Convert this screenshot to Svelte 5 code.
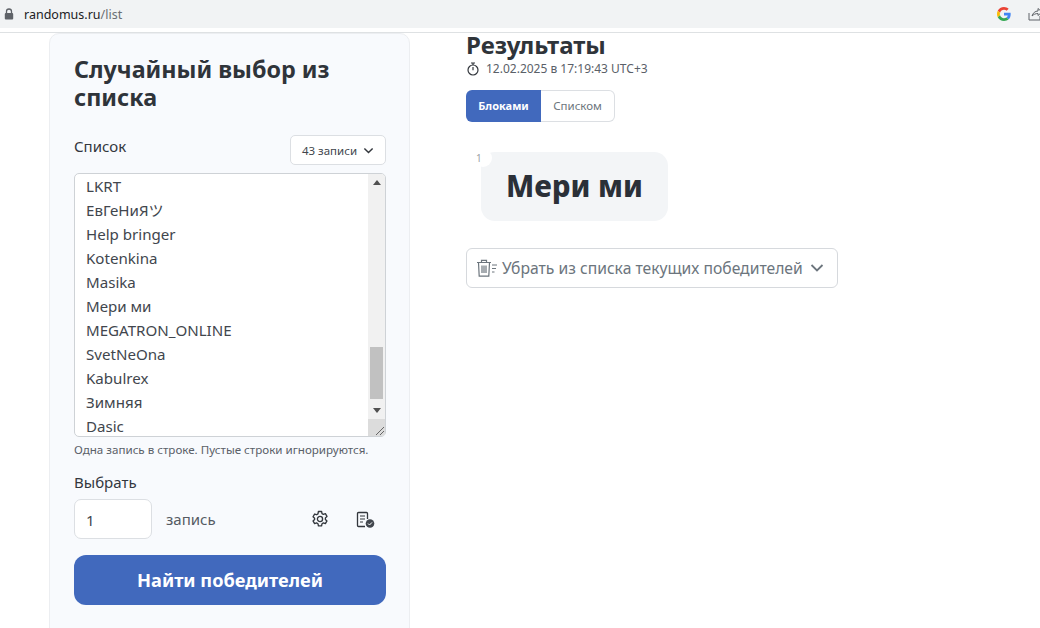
<script>
  const entries = ['LKRT', 'ЕвГеНиЯツ', 'Help bringer', 'Kotenkina', 'Masika', 'Мери ми', 'MEGATRON_ONLINE', 'SvetNeOna', 'Kabulrex', 'Зимняя', 'Dasic'];
</script>

<div class="shot">
  <header class="browser">
    <svg class="lock" viewBox="0 0 10 12" width="10" height="12"><path d="M2.5 5V3.5a2.5 2.5 0 0 1 5 0V5" fill="none" stroke="#5f6368" stroke-width="1.3"/><rect x="0.8" y="5" width="8.4" height="6.4" rx="1" fill="#5f6368"/></svg>
    <span class="url">randomus.ru<span class="path">/list</span></span>
    <div class="browser-icons">
      <svg viewBox="0 0 48 48" width="14" height="14">
        <path fill="#EA4335" d="M24 9.5c3.5 0 6.700 1.300 9.100 3.500l6.800-6.800C35.800 2.400 30.300 0 24 0 14.600 0 6.500 5.400 2.600 13.200l7.900 6.100C12.400 13.700 17.700 9.500 24 9.500z"/>
        <path fill="#4285F4" d="M46.900 24.500c0-1.600-.1-3.100-.4-4.500H24v9h12.900c-.6 3-2.200 5.500-4.700 7.200l7.700 6c4.500-4.200 7-10.300 7-17.700z"/>
        <path fill="#FBBC05" d="M10.500 28.700c-.5-1.400-.8-3-.8-4.700s.3-3.300.8-4.700l-7.900-6.100C.9 16.500 0 20.100 0 24s.9 7.500 2.600 10.800l7.900-6.100z"/>
        <path fill="#34A853" d="M24 48c6.500 0 11.900-2.100 15.900-5.800l-7.700-6c-2.100 1.400-4.900 2.300-8.200 2.300-6.300 0-11.600-4.200-13.500-9.800l-7.900 6.100C6.500 42.600 14.600 48 24 48z"/>
      </svg>
      <svg class="share" viewBox="0 0 14 14" width="14" height="14"><path d="M1 6v7h11V9M4 9c1-3 3-5 6-5V1.500L14 5l-4 3.500V6.500C7.500 6.500 5.500 7.500 4 9z" fill="none" stroke="#5f6368" stroke-width="1"/></svg>
    </div>
  </header>

  <main class="page">
    <section class="card">
      <h1>Случайный выбор из списка</h1>

      <div class="list-head">
        <span class="label">Список</span>
        <button class="count">43 записи
          <svg viewBox="0 0 12 12" width="11" height="11"><path d="M1.500 3.800 6 8.200l4.500-4.400" fill="none" stroke="#33373d" stroke-width="1.600"/></svg>
        </button>
      </div>

      <div class="textarea">
        <div class="lines">
          {#each entries as entry}
            <div>{entry}</div>
          {/each}
        </div>
        <div class="scrollbar">
          <svg class="arrow" viewBox="0 0 8 5" width="8" height="5"><path d="M0 5 4 0l4 5z" fill="#505050"/></svg>
          <div class="track"><div class="thumb"></div></div>
          <svg class="arrow" viewBox="0 0 8 5" width="8" height="5"><path d="M0 0l4 5 4-5z" fill="#505050"/></svg>
          <div class="grip">
            <svg viewBox="0 0 9 9" width="9" height="9"><path d="M1 9 9 1M5 9l4-4" stroke="#666" stroke-width="1"/></svg>
          </div>
        </div>
      </div>
      <p class="hint">Одна запись в строке. Пустые строки игнорируются.</p>

      <div class="label pick">Выбрать</div>
      <div class="pick-row">
        <div class="number">1</div>
        <span class="unit">запись</span>
        <svg class="gear" viewBox="0 0 16 16" width="18" height="18">
          <path fill="none" stroke="#33373d" stroke-width="1.200" stroke-linejoin="round" d="M6.600 1.300h2.800l.4 1.900 1.200.7 1.800-.6 1.400 2.400-1.400 1.300v1.400l1.400 1.300-1.400 2.400-1.800-.6-1.200.7-.4 1.900H6.600l-.4-1.900-1.200-.7-1.800.6-1.400-2.400 1.400-1.300V7.300L1.800 6l1.400-2.400 1.800.6 1.200-.7z"/>
          <circle cx="8" cy="8" r="2.300" fill="none" stroke="#33373d" stroke-width="1.200"/>
        </svg>
        <svg class="checklist" viewBox="0 0 19 17" width="19" height="17">
          <path fill="none" stroke="#33373d" stroke-width="1.300" d="M9 15.500H2.500a1 1 0 0 1-1-1v-12a1 1 0 0 1 1-1h8a1 1 0 0 1 1 1V8"/>
          <path stroke="#33373d" stroke-width="1.200" d="M4 5h5M4 8h5M4 11h3"/>
          <circle cx="14" cy="12.500" r="4.300" fill="#41464d"/>
          <path d="m12 12.500 1.500 1.500 2.500-2.600" fill="none" stroke="#fff" stroke-width="1"/>
        </svg>
      </div>

      <button class="submit">Найти победителей</button>
    </section>

    <section class="results">
      <h2>Результаты</h2>
      <div class="stamp">
        <svg viewBox="0 0 12 14" width="12" height="14"><circle cx="6" cy="8" r="5" fill="none" stroke="#33373d" stroke-width="1.200"/><path d="M4 1h4M6 1v2M6 5v3.200" stroke="#33373d" stroke-width="1.200" fill="none"/></svg>
        <span>12.02.2025 в 17:19:43 UTC+3</span>
      </div>

      <div class="toggle">
        <span class="on">Блоками</span>
        <span class="off">Списком</span>
      </div>

      <div class="winner">
        <span class="rank">1</span>
        <div class="chip">Мери ми</div>
      </div>

      <button class="remove">
        <svg viewBox="0 0 22 20" width="22" height="20">
          <g fill="none" stroke="#6c757d" stroke-width="1.200">
            <path d="M1 4.500h14M5.500 4.500V2.300h5v2.200M2.500 4.500l.7 13.700h9.600l.7-13.700M6 7.500v7.500M8 7.500v7.500M10 7.500v7.500"/>
            <path d="M16 7h5M16 10.500h4M16 14h2.500"/>
          </g>
        </svg>
        <span>Убрать из списка текущих победителей</span>
        <svg viewBox="0 0 14 14" width="14" height="14"><path d="M1.500 4 7 9.500 12.500 4" fill="none" stroke="#6c757d" stroke-width="1.800"/></svg>
      </button>
    </section>
  </main>
</div>

<style>
  :global(body) {
    margin: 0;
    background: #fff;
    font-family: "Noto Sans", "Open Sans", "Noto Sans CJK JP", sans-serif;
    color: #33373d;
  }

  button {
    font-family: inherit;
    cursor: pointer;
  }

  .shot {
    width: 1040px;
    height: 628px;
    overflow: hidden;
  }

  /* browser chrome */
  .browser {
    height: 28px;
    background: #f1f3f4;
    display: flex;
    align-items: center;
    padding-left: 4px;
    box-shadow: 0 4px 0 #fff, 0 5px 0 #dee1e3;
    margin-bottom: 5px;
  }

  .url {
    margin-left: 10px;
    font-size: 12.5px;
    color: #202124;
  }

  .path {
    color: #6b6f73;
  }

  .browser-icons {
    margin-left: auto;
    display: flex;
    align-items: center;
    gap: 17px;
    margin-right: -2px;
  }

  .page {
    display: flex;
    gap: 55px;
    padding-left: 49px;
  }

  /* left card */
  .card {
    width: 312px;
    height: 596px;
    flex: none;
    padding: 21px 23px 0 24px;
    background: #f8fafd;
    border: 1px solid #eceef1;
    border-radius: 10px;
  }

  h1 {
    margin: 0;
    font-size: 23.300px;
    line-height: 28px;
    font-weight: 700;
    color: #2f343a;
  }

  .list-head {
    margin-top: 24px;
    display: flex;
    justify-content: space-between;
    height: 38px;
  }

  .label {
    font-size: 15px;
    line-height: 22px;
    color: #33373d;
  }

  .count {
    width: 96px;
    height: 30px;
    padding: 0;
    display: flex;
    align-items: center;
    justify-content: center;
    gap: 6px;
    background: #fff;
    border: 1px solid #dcdfe3;
    border-radius: 5px;
    font-size: 11.500px;
    color: #41464d;
  }

  .textarea {
    height: 262px;
    display: flex;
    overflow: hidden;
    background: #fff;
    border: 1px solid #ced2d6;
    border-radius: 5px;
  }

  .lines {
    flex: 1;
    padding: 0 11px;
    font-size: 15.100px;
    line-height: 24px;
    color: #41464d;
  }

  .lines div {
    height: 24px;
    white-space: nowrap;
  }

  .scrollbar {
    width: 17px;
    background: #f1f1f1;
    display: flex;
    flex-direction: column;
    align-items: center;
  }

  .arrow {
    flex: none;
    margin: 6px 0;
  }

  .track {
    flex: 1;
    width: 100%;
    display: flex;
    align-items: flex-end;
    justify-content: center;
  }

  .thumb {
    width: 13px;
    height: 52px;
    margin-bottom: 3px;
    background: #c1c1c1;
  }

  .grip {
    width: 100%;
    height: 17px;
    background: #dcdcdc;
    display: flex;
    align-items: flex-end;
    justify-content: flex-end;
    padding: 0 1px 1px 0;
    box-sizing: border-box;
  }

  .hint {
    margin: 5px 0 0;
    font-size: 11.600px;
    line-height: 16px;
    color: #5a6068;
  }

  .pick {
    margin-top: 13px;
    margin-bottom: 6px;
  }

  .pick-row {
    height: 40px;
    display: flex;
    align-items: center;
  }

  .number {
    width: 76px;
    height: 38px;
    background: #fff;
    border: 1px solid #dcdfe3;
    border-radius: 7px;
    font-size: 15px;
    line-height: 40px;
    text-indent: 11px;
    color: #41464d;
  }

  .unit {
    margin-left: 14px;
    font-size: 15px;
    color: #555b63;
  }

  .gear {
    margin-left: auto;
  }

  .checklist {
    margin-left: 27px;
    margin-right: 11px;
  }

  .submit {
    margin-top: 16px;
    width: 100%;
    height: 50px;
    background: #4169bd;
    border: 0;
    border-radius: 12px;
    color: #fff;
    font-size: 18.200px;
    font-weight: 700;
  }

  /* results column */
  .results {
    flex: none;
    width: 372px;
    margin-left: 1px;
  }

  h2 {
    margin: -2px 0 0;
    font-size: 24px;
    line-height: 28px;
    font-weight: 700;
    color: #2f343a;
  }

  .stamp {
    margin-top: 2px;
    margin-left: 1px;
    display: flex;
    align-items: center;
    gap: 7px;
    font-size: 12px;
    line-height: 16px;
    color: #5a6068;
  }

  .toggle {
    margin-top: 13px;
    display: flex;
    width: 149px;
    height: 32px;
    font-size: 11px;
    line-height: 32px;
    text-align: center;
  }

  .on {
    width: 75px;
    background: #4169bd;
    color: #fff;
    font-weight: 700;
    border-radius: 6px 0 0 6px;
  }

  .off {
    flex: 1;
    font-size: 11.500px;
    line-height: 30px;
    color: #6c757d;
    border: 1px solid #dcdfe3;
    border-left: 0;
    border-radius: 0 6px 6px 0;
  }

  .winner {
    position: relative;
    margin-top: 30px;
    padding-left: 15px;
    height: 69px;
  }

  .chip {
    width: 187px;
    height: 69px;
    box-sizing: border-box;
    padding-left: 25px;
    background: #f3f5f7;
    border-radius: 14px;
    font-size: 29.500px;
    font-weight: 800;
    line-height: 68px;
    color: #2b3038;
  }

  .rank {
    position: absolute;
    left: 8px;
    top: -3px;
    width: 18px;
    height: 18px;
    padding-left: 2px;
    box-sizing: border-box;
    background: #fff;
    border-radius: 50%;
    font-size: 10px;
    line-height: 18px;
    color: #9a9fa5;
  }

  .remove {
    margin-top: 27px;
    width: 372px;
    height: 40px;
    padding: 0 0 0 9px;
    display: flex;
    align-items: center;
    gap: 4px;
    background: #fff;
    border: 1px solid #d6d9dd;
    border-radius: 6px;
    font-size: 15.700px;
    color: #6c757d;
  }

  .remove span {
    margin-right: 3px;
    white-space: nowrap;
  }
</style>
